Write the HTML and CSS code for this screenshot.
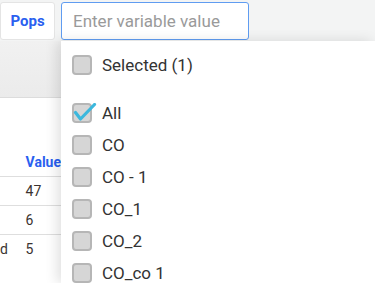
FILE: index.html
```html
<!DOCTYPE html>
<html lang="en">
<head>
    <meta charset="UTF-8">
    <meta name="viewport" content="width=device-width, initial-scale=1.0">
    <title>Variable filter</title>
    <link rel="stylesheet" href="styles.css">
</head>
<body>

    <div class="toolbar">
        <button class="pops-btn">Pops</button>
        <input class="search" type="text" placeholder="Enter variable value">
    </div>

    <div class="subbar"></div>

    <!-- table is scrolled sideways, only the tail of the first column shows -->
    <table class="data">
        <thead>
            <tr><th class="name"></th><th>Value</th></tr>
        </thead>
        <tbody>
            <tr><td class="name"></td><td>47</td></tr>
            <tr><td class="name"></td><td>6</td></tr>
            <tr><td class="name">d</td><td>5</td></tr>
        </tbody>
    </table>

    <!-- Dropdown with the variable values -->
    <div class="dropdown">
        <label class="option"><span class="box"></span>Selected (1)</label>
        <div class="options">
            <label class="option">
                <span class="box">
                    <svg class="tick" viewBox="0 0 24 20" width="24" height="20">
                        <path d="M2.5 9.5 L7.5 16 L21.5 1.5" fill="none" stroke="#3cb8dd" stroke-width="3.2" stroke-linecap="round" stroke-linejoin="round"/>
                    </svg>
                </span>All
            </label>
            <label class="option"><span class="box"></span>CO</label>
            <label class="option"><span class="box"></span>CO - 1</label>
            <label class="option"><span class="box"></span>CO_1</label>
            <label class="option"><span class="box"></span>CO_2</label>
            <label class="option"><span class="box"></span>CO_co 1</label>
        </div>
    </div>

</body>
</html>
```

FILE: styles.css
```css
body {
    font-family: Roboto, "Noto Sans", sans-serif;
    margin: 0;
    background-color: #fff;
    color: #333;
    height: 283px;
    overflow: hidden;
    position: relative;
}

.toolbar {
    display: flex;
    gap: 6px;
    padding: 2px 0 1px 0;
    background-color: #f3f4f4;
    height: 38px;
}

.pops-btn {
    width: 55px;
    height: 38px;
    background-color: #fff;
    border: 1px solid #e4e4e4;
    border-radius: 3px;
    color: #2a5ff0;
    font-family: Roboto, sans-serif;
    font-weight: bold;
    font-size: 15px;
    padding: 0;
}

.search {
    width: 188px;
    height: 38px;
    box-sizing: border-box;
    border: 1px solid #5f9cf1;
    border-radius: 3px;
    padding: 0 11px;
    font-family: Roboto, sans-serif;
    font-size: 17px;
    color: #333;
    outline: none;
}

.search::placeholder {
    color: #9a9a9a;
}

.subbar {
    height: 56px;
    background: linear-gradient(#f1f1f1, #ebebeb);
    border-bottom: 1px solid #dcdcdc;
}

.data {
    margin-top: 50px;
    border-collapse: collapse;
    width: 61px;
    font-size: 14px;
}

.data th, .data td {
    text-align: left;
    height: 28px;
    padding: 0;
    border-bottom: 1px solid #dedede;
    white-space: nowrap;
}

.data tbody tr:last-child td {
    border-bottom: none;
}

.data th {
    color: #2a5ff0;
    font-weight: bold;
}

.data .name {
    width: 27px;
}

.data td {
    color: #3b3330;
}

.dropdown {
    position: absolute;
    left: 61px;
    top: 41px;
    right: 0;
    bottom: 0;
    background-color: #fff;
    box-shadow: -4px 0 12px rgba(0, 0, 0, 0.12);
    padding: 8px 0 0 11px;
}

.options {
    margin-top: 16px;
}

.option {
    display: flex;
    align-items: center;
    gap: 10px;
    height: 32px;
    font-size: 17px;
    color: #333;
}

.box {
    position: relative;
    width: 20px;
    height: 20px;
    box-sizing: border-box;
    background-color: #d6d6d6;
    border: 2px solid #b6b6b6;
    border-radius: 4px;
}

.tick {
    position: absolute;
    left: -1px;
    top: -2px;
}
```
